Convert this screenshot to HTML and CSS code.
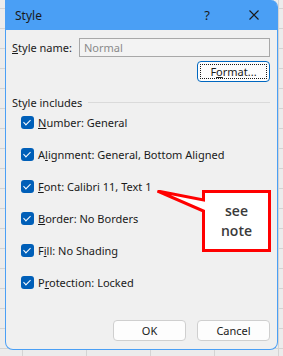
FILE: index.html
```html
<!DOCTYPE html>
<html lang="en">
<head>
  <meta charset="UTF-8" />
  <title>Style</title>
  <link rel="stylesheet" href="styles.css">
</head>
<body>
  <div class="dialog">
    <div class="titlebar">
      <span class="title">Style</span>
      <span class="help">?</span>
      <svg class="close" width="10" height="10" viewBox="0 0 10 10"><path d="M0.5 0.5 L9.5 9.5 M9.5 0.5 L0.5 9.5" stroke="#1a1a1a" stroke-width="1.1"/></svg>
    </div>
    <div class="content">
      <div class="name-row">
        <span class="label"><u>S</u>tyle name:</span>
        <div class="input">Normal</div>
      </div>
      <div class="format-row">
        <button class="btn format"><span class="focus">F<u>o</u>rmat...</span></button>
      </div>
      <div class="group-title"><span>Style includes</span><div class="rule"></div></div>
      <div class="checks">
        <div class="check"><span class="box"></span><span><u>N</u>umber: General</span></div>
        <div class="check"><span class="box"></span><span>A<u>l</u>ignment: General, Bottom Aligned</span></div>
        <div class="check"><span class="box"></span><span><u>F</u>ont: Calibri 11, Text 1</span></div>
        <div class="check"><span class="box"></span><span><u>B</u>order: No Borders</span></div>
        <div class="check"><span class="box"></span><span>F<u>i</u>ll: No Shading</span></div>
        <div class="check"><span class="box"></span><span>P<u>r</u>otection: Locked</span></div>
      </div>
      <div class="actions">
        <button class="btn">OK</button>
        <button class="btn">Cancel</button>
      </div>
    </div>
    <svg class="callout" width="120" height="66" viewBox="0 0 120 66">
      <path d="M47.5 1.5 H113.5 V60.5 H47.5 V21 L1.5 1 L47.5 10 Z" fill="#ffffff" stroke="#ff0000" stroke-width="3" stroke-linejoin="miter"/>
      <text x="80.5" y="26" text-anchor="middle">see</text>
      <text x="80.5" y="46" text-anchor="middle">note</text>
    </svg>
  </div>
</body>
</html>
```
FILE: styles.css
```css
body {
  margin: 0;
  width: 283px;
  height: 356px;
  overflow: hidden;
  background-color: #ececec;
  background-image:
    linear-gradient(to right, transparent 0 22px, #d4d4d4 22px 23px, transparent 23px),
    linear-gradient(to bottom, transparent 0 8px, #d4d4d4 8px 9px, transparent 9px);
  background-size: 64px 20px;
  font-family: "Segoe UI", "Noto Sans", sans-serif;
  font-size: 11px;
  color: #1a1a1a;
}

.dialog {
  position: relative;
  margin-left: 5px;
  width: 273px;
  height: 350px;
  box-sizing: border-box;
  background: #f0f0f0;
  border: 1px solid #4a9ff5;
  border-top: none;
  border-radius: 0 7px 8px 8px;
  display: flex;
  flex-direction: column;
}

.titlebar {
  height: 30px;
  background: #4a9ff5;
  border-top-right-radius: 6px;
  display: flex;
  align-items: center;
  padding: 0 18px 0 9px;
  font-size: 12px;
}
.title { flex: 1; }
.help { margin-right: 39px; font-size: 13px; }

.content {
  flex: 1;
  display: flex;
  flex-direction: column;
  padding: 8px 7px 0 6px;
}

.name-row {
  display: flex;
  align-items: center;
  height: 19px;
}
.name-row .label { width: 67px; }
.input {
  flex: 1;
  height: 19px;
  box-sizing: border-box;
  border: 1px solid #a8a8a8;
  background: #f3f3f3;
  color: #8a8a8a;
  padding-left: 4px;
  line-height: 17px;
}

.format-row {
  display: flex;
  justify-content: flex-end;
  margin-top: 4px;
}

.btn {
  font: inherit;
  color: #1a1a1a;
  width: 73px;
  height: 21px;
  background: #fdfdfd;
  border: 1px solid #cfcfcf;
  border-radius: 4px;
  padding: 0;
}
.format {
  border: 1px solid #0067c0;
  padding: 2px;
}
.format .focus {
  display: block;
  height: 100%;
  box-sizing: border-box;
  border: 1px dotted #1a1a1a;
  line-height: 13px;
}

.group-title {
  display: flex;
  align-items: center;
  margin-top: 12px;
  height: 16px;
}
.group-title .rule {
  flex: 1;
  height: 1px;
  background: #dadada;
  margin-left: 6px;
}

.checks {
  display: flex;
  flex-direction: column;
  gap: 16px;
  margin-top: 4px;
  padding-left: 9px;
}
.check {
  display: flex;
  align-items: center;
  height: 16px;
  gap: 4px;
}
.box {
  width: 13px;
  height: 13px;
  border-radius: 3px;
  background: #005fb8;
  position: relative;
}
.box::after {
  content: "";
  position: absolute;
  left: 4px;
  top: 2px;
  width: 3px;
  height: 6px;
  border: solid #ffffff;
  border-width: 0 1px 1px 0;
  transform: rotate(45deg);
}

.actions {
  display: flex;
  justify-content: flex-end;
  gap: 11px;
  margin-top: auto;
  margin-bottom: 8px;
}

.callout {
  position: absolute;
  left: 150px;
  top: 190px;
}
.callout text {
  font-family: "Open Sans", sans-serif;
  font-weight: 600;
  font-size: 14px;
  fill: #3a3a3a;
}
```
